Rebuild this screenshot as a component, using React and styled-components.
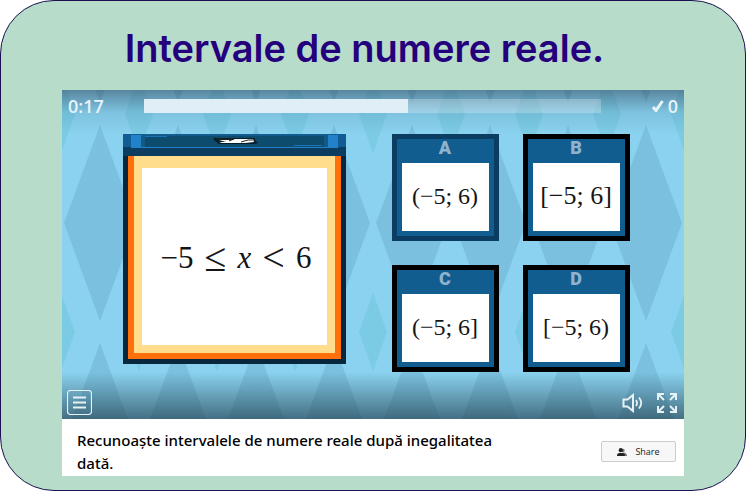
import React from "react";
import styled, { createGlobalStyle } from "styled-components";

const GlobalStyle = createGlobalStyle`
  *, *::before, *::after { box-sizing: border-box; }
  body { margin: 0; background: #ffffff; font-family: "Open Sans", "Noto Sans", sans-serif; }
  button { font: inherit; cursor: pointer; }
`;

const Page = styled.main`
  min-height: 100vh;
  display: flex;
  flex-direction: column;
  padding: 0 61px 14px;
  background: #b7dcca;
  border: 1px solid #1b1150;
  border-radius: 54px;
`;

const Title = styled.h1`
  margin: 0;
  padding: 23px 17px 18px 0;
  color: #24007c;
  font: 600 38px/48px Inter, sans-serif;
  text-align: center;
`;

const Activity = styled.section`
  flex: 1;
  display: flex;
  flex-direction: column;
  background: #ffffff;
`;

const Game = styled.div`
  position: relative;
  isolation: isolate;
  overflow: hidden;
  background: #8ad2ef;
`;

const Backdrop = styled.svg`
  position: absolute;
  inset: 0;
  z-index: -1;
  width: 100%;
  height: 100%;
`;

const TopBar = styled.header`
  display: flex;
  align-items: center;
  gap: 24px;
  height: 44px;
  padding: 0 6px 13px;
  color: #e6f3f9;
  font: 600 18px/24px "Open Sans", sans-serif;
  background: linear-gradient(rgba(40, 60, 80, 0.5), rgba(60, 110, 140, 0.16) 50%, transparent);
`;

const Timer = styled.time`
  width: 52px;
`;

const Progress = styled.progress`
  appearance: none;
  flex: 1;
  min-width: 0;
  height: 14px;
  border: 0;
  background: rgba(255, 255, 255, 0.25);

  &::-webkit-progress-bar { background: transparent; }
  &::-webkit-progress-value { background: #e0eff7; }
`;

const Score = styled.span`
  display: flex;
  align-items: center;
  justify-content: flex-end;
  gap: 4px;
  width: 53px;
`;

const Board = styled.div`
  display: flex;
  justify-content: center;
  align-items: flex-start;
  gap: 46px;
  padding-left: 6px;
`;

const QuestionCard = styled.div`
  width: 223px;
`;

const CardLid = styled.svg`
  display: block;
  width: 100%;
  height: 22px;
`;

const CardRim = styled.div`
  padding: 0 5px 5px;
  background: #08263c;
`;

const CardEdge = styled.div`
  padding: 0 6px 6px;
  background: #ff6f0b;
`;

const CardFace = styled.div`
  padding: 12px 8px 8px;
  background: #ffdd8c;
`;

const Formula = styled.div`
  display: flex;
  align-items: center;
  justify-content: center;
  gap: 11px;
  height: 177px;
  padding: 2px 0 0 4px;
  background: #ffffff;
  color: #151515;
  font: 31px/36px "Liberation Serif", serif;
`;

const Operator = styled.span`
  font-size: 40px;
`;

const Answers = styled.div`
  display: grid;
  grid-template-columns: repeat(2, 107px);
  gap: 24px;
`;

const AnswerTile = styled.button`
  display: flex;
  flex-direction: column;
  height: 107px;
  padding: 0 5px 5px;
  border: 5px solid ${(p) => (p.$selected ? "#0b3d63" : "#000000")};
  background: #125d90;
`;

const Letter = styled.span`
  height: 24px;
  width: 100%;
  color: #8fb3cd;
  font: 900 18px/18px Roboto, sans-serif;
  text-align: center;
`;

const Interval = styled.span`
  flex: 1;
  width: 100%;
  display: flex;
  align-items: center;
  justify-content: center;
  padding-bottom: 2px;
  background: #ffffff;
  color: #151515;
  font: ${(p) => (p.$large ? 26 : 24)}px/32px "Liberation Serif", serif;
  white-space: nowrap;
`;

const Controls = styled.footer`
  display: flex;
  align-items: center;
  justify-content: space-between;
  height: 47px;
  padding: 14px 6px 0 5px;
  background: linear-gradient(transparent, rgba(35, 65, 80, 0.68));
`;

const ControlGroup = styled.div`
  display: flex;
  align-items: center;
  gap: 12px;
`;

const IconButton = styled.button`
  display: flex;
  padding: 0;
  border: 0;
  background: transparent;
  color: #e6f1f6;
`;

const Caption = styled.div`
  flex: 1;
  display: flex;
  align-items: center;
  justify-content: space-between;
  gap: 24px;
  padding: 8px 8px 0 15px;
`;

const Description = styled.p`
  margin: 0;
  max-width: 440px;
  color: #000000;
  font: 500 15px/23px "Noto Sans", "Open Sans", sans-serif;
`;

const ShareButton = styled.button`
  display: flex;
  align-items: center;
  justify-content: center;
  gap: 8px;
  flex: none;
  width: 75px;
  height: 21px;
  padding: 0;
  border: 1px solid #cccccc;
  border-radius: 2px;
  background: #f7f7f7;
  color: #222222;
  font: 9px/12px "Open Sans", sans-serif;
`;

const columns = Array.from({ length: 24 }, (_, i) => i);

function DiamondBackdrop() {
  return (
    <Backdrop aria-hidden="true">
      {columns.map((i) => {
        const small = 78 * i - 1;
        const big = 78 * i + 38;
        return (
          <g key={i}>
            {[-183, 35, 253].map((y) => (
              <path key={y} fill="#7bc1df" d={`M${big} ${y}l36 98l-36 98l-36-98z`} />
            ))}
            {[-15, 203].map((y) => (
              <path key={y} fill="#7ccbe5" d={`M${small} ${y}l14 39l-14 39l-14-39z`} />
            ))}
          </g>
        );
      })}
    </Backdrop>
  );
}

function Lid() {
  return (
    <CardLid viewBox="0 0 223 22" preserveAspectRatio="none" aria-hidden="true">
      <path fill="#0c3d60" d="M0 0h223v22H0z" />
      <path fill="#115c94" d="M0 1h223v12H0z" />
      <path fill="#2182c9" d="M8 1h207v13H8z" />
      <path fill="#135a87" d="M18 1h187v12H18z" />
      <path fill="#0d4c6d" d="M22 2h179v11H22z" />
      <path fill="#115d95" d="M0 0h223v1H0z" />
      <path fill="#1b73b5" d="M22 2h22v1H22zM171 11h28v1h-28z" />
      <path fill="#071e2b" d="M90 4h42v2l3 3-4 1H96l-4-3z" />
      <path fill="#fff" d="M96 6h11l5-1h18l1 3-9 1H99l-3-1h7z" />
      <path stroke="#222" fill="none" d="M93 5h18l-5 2M118 8l7-2h5" />
    </CardLid>
  );
}

function CheckIcon() {
  return (
    <svg width="12" height="12" viewBox="0 0 12 12" fill="none" stroke="currentColor" strokeWidth="3" aria-hidden="true">
      <path d="M1 7l3 3.5L10.5 1" />
    </svg>
  );
}

function MenuIcon() {
  return (
    <svg width="25" height="25" viewBox="0 0 25 25" fill="none" stroke="currentColor" aria-hidden="true">
      <rect x="0.5" y="0.5" width="24" height="24" rx="3" strokeWidth="1.2" />
      <path d="M6 7.5h13M6 12.5h13M6 17.5h13" strokeWidth="2" />
    </svg>
  );
}

function SoundIcon() {
  return (
    <svg width="22" height="20" viewBox="0 0 22 20" fill="none" stroke="currentColor" aria-hidden="true">
      <path d="M1.5 6.5h4L11 2v16l-5.5-4.5h-4z" strokeWidth="2" />
      <path d="M14 7q2 3 0 6M17 4.500q4.500 5.500 0 11" strokeWidth="1.8" />
    </svg>
  );
}

function ExpandIcon() {
  return (
    <svg width="22" height="22" viewBox="0 0 22 22" fill="none" stroke="currentColor" strokeWidth="2" aria-hidden="true">
      <path d="M2 8V2H8M2 2l6 6M14 2h6v6M20 2L14 8M2 14v6H8M2 20L8 14M14 20h6v-6M20 20L14 14" />
    </svg>
  );
}

function PeopleIcon() {
  return (
    <svg width="10" height="8" viewBox="0 0 10 8" fill="currentColor" aria-hidden="true">
      <circle cx="6" cy="2.500" r="1.700" opacity="0.6" />
      <path opacity="0.6" d="M5 8V5l2-.5q3 .5 3 3.500z" />
      <circle cx="3.800" cy="2.200" r="2.100" />
      <path d="M0 8q0-2.800 2.600-3h2.400q2.800.2 3 3z" />
    </svg>
  );
}

const answers = [
  { letter: "A", text: "(−5; 6)", selected: true },
  { letter: "B", text: "[−5; 6]", large: true },
  { letter: "C", text: "(−5; 6]" },
  { letter: "D", text: "[−5; 6)" },
];

export default function App() {
  return (
    <>
      <GlobalStyle />
      <Page>
        <Title>Intervale de numere reale.</Title>
        <Activity>
          <Game>
            <DiamondBackdrop />
            <TopBar>
              <Timer>0:17</Timer>
              <Progress value={57.8} max={100} aria-label="Progres" />
              <Score>
                <CheckIcon />0
              </Score>
            </TopBar>
            <Board>
              <QuestionCard>
                <Lid />
                <CardRim>
                  <CardEdge>
                    <CardFace>
                      <Formula>
                        <span>−5</span>
                        <Operator>≤</Operator>
                        <i>x</i>
                        <Operator>&lt;</Operator>
                        <span>6</span>
                      </Formula>
                    </CardFace>
                  </CardEdge>
                </CardRim>
              </QuestionCard>
              <Answers>
                {answers.map((a) => (
                  <AnswerTile key={a.letter} type="button" $selected={a.selected}>
                    <Letter>{a.letter}</Letter>
                    <Interval $large={a.large}>{a.text}</Interval>
                  </AnswerTile>
                ))}
              </Answers>
            </Board>
            <Controls>
              <IconButton type="button" aria-label="Meniu">
                <MenuIcon />
              </IconButton>
              <ControlGroup>
                <IconButton type="button" aria-label="Sunet">
                  <SoundIcon />
                </IconButton>
                <IconButton type="button" aria-label="Ecran complet">
                  <ExpandIcon />
                </IconButton>
              </ControlGroup>
            </Controls>
          </Game>
          <Caption>
            <Description>Recunoaște intervalele de numere reale după inegalitatea dată.</Description>
            <ShareButton type="button">
              <PeopleIcon />
              Share
            </ShareButton>
          </Caption>
        </Activity>
      </Page>
    </>
  );
}
